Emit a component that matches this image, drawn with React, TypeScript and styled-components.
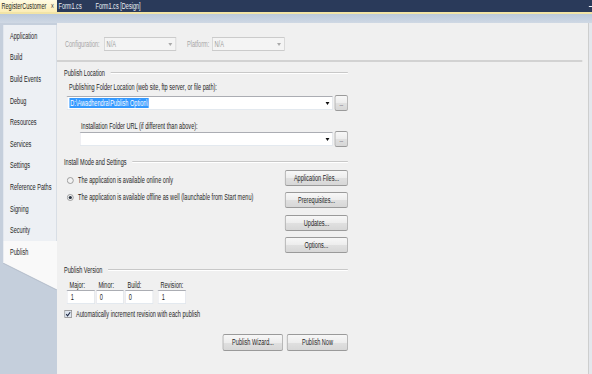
import styled, { createGlobalStyle } from 'styled-components'

// the screenshot is squeezed sideways: lay the page out wide and scale it back
const SX = 0.655
const px = (n: number) => `${(n / SX).toFixed(2)}px`

const pages = [
  'Application',
  'Build',
  'Build Events',
  'Debug',
  'Resources',
  'Services',
  'Settings',
  'Reference Paths',
  'Signing',
  'Security',
  'Publish',
]

const installButtons = ['Application Files...', 'Prerequisites...', 'Updates...', 'Options...']

const versionParts = [
  { label: 'Major:', value: '1' },
  { label: 'Minor:', value: '0' },
  { label: 'Build:', value: '0' },
  { label: 'Revision:', value: '1' },
]

const GlobalStyle = createGlobalStyle`
  html, body {
    margin: 0;
    padding: 0;
    overflow: hidden;
    background: #c4cedc;
  }
  body {
    font-family: "Liberation Sans", Arial, sans-serif;
    font-size: 8.5px;
    color: #1e1e1e;
  }
`

const Stage = styled.div`
  width: ${px(592)};
  height: 374px;
  display: flex;
  flex-direction: column;
  overflow: hidden;
  transform: scaleX(${SX});
  transform-origin: 0 0;
  background: #c4cedc;
`

const DocTabs = styled.div`
  flex: none;
  height: 12px;
  display: flex;
  align-items: stretch;
  background: #2a3a5a;
`

const DocTab = styled.div<{ $active?: boolean; $w?: number }>`
  flex: none;
  width: ${p => (p.$w ? px(p.$w) : 'auto')};
  box-sizing: border-box;
  display: flex;
  align-items: center;
  justify-content: space-between;
  padding: 0 ${px(3)} 0 ${px(1.5)};
  line-height: 12px;
  white-space: nowrap;
  color: ${p => (p.$active ? '#1e1e1e' : '#e9edf4')};
  background: ${p => (p.$active ? 'linear-gradient(#fffbe3, #fbedb6)' : 'transparent')};
`

const CloseMark = styled.span`
  color: #4a4a4a;
`

const TabMenu = styled.div`
  margin-left: auto;
  align-self: center;
  width: ${px(3)};
  height: 1px;
  background: #e8ecf3;
`

const Accent = styled.div`
  flex: none;
  height: 2px;
  background: #f2e4a6;
`

const Band = styled.div`
  flex: none;
  height: 9px;
  background: linear-gradient(#bccadb, #cfd8e4);
`

const Designer = styled.div`
  flex: 1;
  min-height: 0;
  display: flex;
  background: #e4e7ec;
`

const Sidebar = styled.nav`
  flex: none;
  width: ${px(57)};
  padding-top: 2px;
  display: flex;
  flex-direction: column;
  background: #c5cfdc;
`

const SideTab = styled.div<{ $selected?: boolean }>`
  flex: none;
  height: 21.6px;
  box-sizing: border-box;
  margin-left: ${px(3)};
  padding-left: ${px(7)};
  display: flex;
  align-items: center;
  white-space: nowrap;
  background: ${p => (p.$selected ? '#f9f9f9' : '#edf0f4')};
  border-right: ${p => (p.$selected ? 'none' : `${px(1)} solid #cdd4de`)};
`

const TabTail = styled.svg`
  display: block;
  flex: none;
  width: ${px(57)};
  height: 27px;
`

const Content = styled.main`
  flex: 1;
  display: flex;
  flex-direction: column;
  background: #f0f0f0;
  border-right: ${px(1)} solid #bcbcbc;
  margin-right: ${px(3)};
`

const ConfigBar = styled.div`
  display: flex;
  align-items: center;
  padding: 14px 0 9px ${px(8)};
`

const ConfigLabel = styled.span<{ $w: number }>`
  flex: none;
  width: ${p => px(p.$w)};
  color: #a6a6a6;
  white-space: nowrap;
`

const Separator = styled.div`
  height: 2px;
  background: #d2d2d2;
  margin-right: ${px(6)};
`

const Sections = styled.div`
  width: ${px(284)};
  padding-left: ${px(7)};
  display: flex;
  flex-direction: column;
`

const GroupHeader = styled.div<{ $top: number }>`
  height: 12px;
  margin-top: ${p => p.$top}px;
  display: flex;
  align-items: center;
  gap: ${px(6)};
  white-space: nowrap;

  &::after {
    content: '';
    flex: 1;
    border-top: 1px solid #c8c8c8;
    border-bottom: 1px solid #ffffff;
  }
`

const Caption = styled.div<{ $top: number; $indent: number }>`
  margin-top: ${p => p.$top}px;
  padding-left: ${p => px(p.$indent)};
  line-height: 10px;
  white-space: nowrap;
`

const PathRow = styled.div<{ $indent: number }>`
  height: 16px;
  margin-top: 3px;
  padding-left: ${p => px(p.$indent)};
  display: flex;
  align-items: center;
  gap: ${px(2)};
`

const Combo = styled.div<{ $w: number; $disabled?: boolean }>`
  flex: none;
  width: ${p => px(p.$w)};
  height: 14px;
  box-sizing: border-box;
  display: flex;
  align-items: center;
  padding: 0 ${px(3)} 0 ${px(1)};
  border-style: solid;
  border-width: 1px ${px(1)};
  border-color: ${p => (p.$disabled ? '#cbcbcb' : '#abadb3 #dbdfe6 #e3e9ef #e2e3ea')};
  background: ${p => (p.$disabled ? '#f4f4f4' : '#ffffff')};
  color: ${p => (p.$disabled ? '#9c9c9c' : '#1e1e1e')};
  white-space: nowrap;
`

const ComboText = styled.span`
  flex: 1;
  padding-left: ${px(1)};
`

const Selection = styled.span`
  padding: 0 ${px(1)};
  line-height: 11px;
  background: #3399ff;
  color: #ffffff;
`

const ComboArrow = styled.span<{ $disabled?: boolean }>`
  flex: none;
  width: 0;
  height: 0;
  border-left: ${px(2)} solid transparent;
  border-right: ${px(2)} solid transparent;
  border-top: 3px solid ${p => (p.$disabled ? '#a9a9a9' : '#111111')};
`

const Button = styled.button<{ $w: number; $h?: number }>`
  flex: none;
  width: ${p => px(p.$w)};
  height: ${p => p.$h ?? 16}px;
  box-sizing: border-box;
  margin: 0;
  padding: 0;
  font: inherit;
  color: #1e1e1e;
  white-space: nowrap;
  border-style: solid;
  border-width: 1px ${px(1)};
  border-color: #9a9a9a;
  border-radius: ${px(2)} / 2px;
  background: linear-gradient(#f7f7f7 0%, #ededed 50%, #e0e0e0 51%, #d7d7d7 100%);
`

const BrowseButton = styled(Button)`
  line-height: 12px;
  padding-top: 2px;
  font-size: 7px;
  color: #333333;
`

const InstallBody = styled.div`
  margin-top: 2px;
  display: flex;
  justify-content: space-between;
`

const RadioList = styled.div`
  padding: 4px 0 0 ${px(3)};
  display: flex;
  flex-direction: column;
  gap: 5px;
`

const Option = styled.label`
  height: 12px;
  display: flex;
  align-items: center;
  gap: ${px(4)};
  white-space: nowrap;
`

const Glyph = styled.svg<{ $w: number; $h: number }>`
  flex: none;
  display: block;
  width: ${p => px(p.$w)};
  height: ${p => p.$h}px;
`

const ButtonStack = styled.div`
  display: flex;
  flex-direction: column;
  gap: 6.3px;
`

const VersionGrid = styled.div`
  margin-top: 4px;
  padding-left: ${px(3)};
  display: grid;
  grid-template-columns: ${px(29)} ${px(29)} ${px(33)} ${px(30)};
`

const VersionField = styled.div`
  display: flex;
  flex-direction: column;
`

const VersionCaption = styled.span`
  line-height: 10px;
  padding-left: ${px(2.5)};
`

const TextBox = styled.div`
  width: ${px(28)};
  height: 14px;
  box-sizing: border-box;
  padding-left: ${px(3)};
  line-height: 12px;
  border-style: solid;
  border-width: 1px ${px(1)};
  border-color: #abadb3 #dbdfe6 #e3e9ef #e2e3ea;
  background: #ffffff;
`

const CheckRow = styled.label`
  height: 10px;
  margin-top: 5px;
  display: flex;
  align-items: center;
  gap: ${px(4)};
  white-space: nowrap;
`

const ActionBar = styled.div`
  margin-top: 15px;
  display: flex;
  justify-content: flex-end;
  gap: ${px(4)};
`

const Radio = ({ checked }: { checked?: boolean }) => (
  <Glyph $w={7} $h={7} viewBox="0 0 7 7" preserveAspectRatio="none">
    <circle cx="3.5" cy="3.5" r="3" fill="#f3f3f3" stroke="#8c8c8c" strokeWidth="0.8" />
    {checked && <circle cx="3.5" cy="3.5" r="1.6" fill="#27313f" />}
  </Glyph>
)

const App = () => {
  return (
    <>
      <GlobalStyle />
      <Stage>
        <DocTabs>
          <DocTab $active $w={57}>
            RegisterCustomer <CloseMark>×</CloseMark>
          </DocTab>
          <DocTab $w={37}>Form1.cs</DocTab>
          <DocTab>Form1.cs [Design]</DocTab>
          <TabMenu />
        </DocTabs>
        <Accent />
        <Band />
        <Designer>
          <Sidebar>
            {pages.map(page => (
              <SideTab key={page} $selected={page === 'Publish'}>
                {page}
              </SideTab>
            ))}
            <TabTail viewBox="0 0 57 27" preserveAspectRatio="none">
              <polygon points="3,0 57,0 57,27" fill="#f9f9f9" />
              <line x1="3" y1="0" x2="57" y2="27" stroke="#a9b4c3" strokeWidth="0.8" />
            </TabTail>
          </Sidebar>

          <Content>
            <ConfigBar>
              <ConfigLabel $w={39}>Configuration:</ConfigLabel>
              <Combo $w={72} $disabled>
                <ComboText>N/A</ComboText>
                <ComboArrow $disabled />
              </Combo>
              <ConfigLabel $w={25} style={{ marginLeft: px(11) }}>
                Platform:
              </ConfigLabel>
              <Combo $w={73} $disabled>
                <ComboText>N/A</ComboText>
                <ComboArrow $disabled />
              </Combo>
            </ConfigBar>
            <Separator />

            <Sections>
              <GroupHeader $top={5}>Publish Location</GroupHeader>
              <Caption $top={3} $indent={5}>
                Publishing Folder Location (web site, ftp server, or file path):
              </Caption>
              <PathRow $indent={2.7}>
                <Combo $w={266.3}>
                  <ComboText>
                    <Selection>D:\Awadhendra\Publish Option\</Selection>
                  </ComboText>
                  <ComboArrow />
                </Combo>
                <BrowseButton $w={13}>...</BrowseButton>
              </PathRow>
              <Caption $top={10} $indent={17}>
                Installation Folder URL (if different than above):
              </Caption>
              <PathRow $indent={16} style={{ marginTop: 0 }}>
                <Combo $w={253}>
                  <ComboText />
                  <ComboArrow />
                </Combo>
                <BrowseButton $w={13}>...</BrowseButton>
              </PathRow>

              <GroupHeader $top={9}>Install Mode and Settings</GroupHeader>
              <InstallBody>
                <RadioList>
                  <Option>
                    <Radio />
                    The application is available online only
                  </Option>
                  <Option>
                    <Radio checked />
                    The application is available offline as well (launchable from Start menu)
                  </Option>
                </RadioList>
                <ButtonStack>
                  {installButtons.map(label => (
                    <Button key={label} $w={63}>
                      {label}
                    </Button>
                  ))}
                </ButtonStack>
              </InstallBody>

              <GroupHeader $top={11}>Publish Version</GroupHeader>
              <VersionGrid>
                {versionParts.map(part => (
                  <VersionField key={part.label}>
                    <VersionCaption>{part.label}</VersionCaption>
                    <TextBox>{part.value}</TextBox>
                  </VersionField>
                ))}
              </VersionGrid>
              <CheckRow>
                <Glyph $w={8} $h={8} viewBox="0 0 8 8" preserveAspectRatio="none">
                  <rect x="0.5" y="0.5" width="7" height="7" fill="#dfe6f0" stroke="#8d8d8d" strokeWidth="0.8" />
                  <path d="M2 4.2 L3.4 5.8 L6 2.2" fill="none" stroke="#1f2a44" strokeWidth="1.1" />
                </Glyph>
                Automatically increment revision with each publish
              </CheckRow>

              <ActionBar>
                <Button $w={60} $h={17}>
                  Publish Wizard...
                </Button>
                <Button $w={61} $h={17}>
                  Publish Now
                </Button>
              </ActionBar>
            </Sections>
          </Content>
        </Designer>
      </Stage>
    </>
  )
}

export default App
